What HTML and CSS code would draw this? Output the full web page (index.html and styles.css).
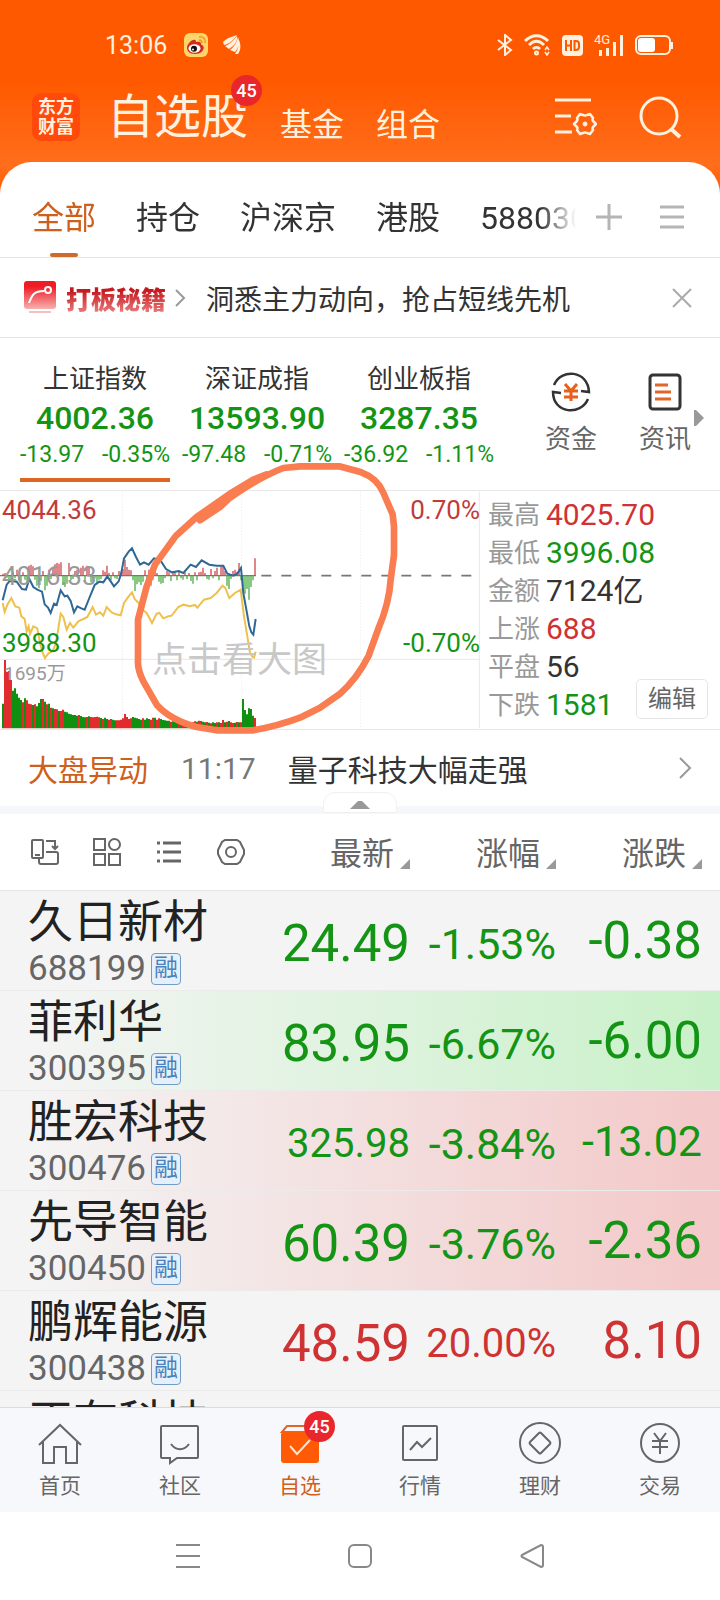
FILE: index.html
```html
<!DOCTYPE html>
<html lang="zh-CN">
<head>
	<meta charset="UTF-8">
	<meta name="viewport" content="width=device-width, initial-scale=1">
	<title>自选股</title>
	<link rel="stylesheet" href="styles.css">
</head>
<body>
	<header class="top">
		<div class="status">
			<span class="time">13:06</span>
			<svg class="weibo" width="24" height="24" viewBox="0 0 24 24">
				<rect width="24" height="24" rx="6" fill="#fdd56b"/>
				<path d="M3 15c0-4 5-9 8-8 1 0 1 2 1 2s4-1 5 1c0 1 0 2 1 2 4 2 1 9-7 9-5 0-8-3-8-6z" fill="#d52b1e"/>
				<ellipse cx="10.500" cy="15.500" rx="6" ry="4.200" fill="#fff"/>
				<circle cx="10" cy="15.800" r="3" fill="#111"/>
				<circle cx="9" cy="16.500" r="1" fill="#fff"/>
				<path d="M15 4c4-1 7 2 6 6M15 7c2 0 3 1 3 3" fill="none" stroke="#f39a1d" stroke-width="1.500"/>
			</svg>
			<svg width="18" height="20" viewBox="0 0 18 20" fill="#fff1df">
				<path d="M0 7C4 3 8 2 14 0 11 5 6 9 1 10zM2 11c5-2 9-6 12-10 1 5-3 10-8 13zM7 15c4-3 7-8 8-13 2 5 1 10-3 15zM12 19c3-4 4-9 4-14 2 5 2 10-1 14z"/>
			</svg>
			<div class="signals">
				<svg width="16" height="22" viewBox="0 0 16 22"><path d="M1 6l13 10-6 5V1l6 5L1 16" fill="none" stroke="#fff1df" stroke-width="2"/></svg>
				<svg width="27" height="22" viewBox="0 0 27 22" fill="none" stroke="#fff1df" stroke-width="3">
					<path d="M1 7c7-7 16-7 23 0M5 11c5-5 10-5 15 0M9 15c2-2 5-2 7 0"/>
					<circle cx="12.500" cy="19" r="1" />
					<path d="M21 16l2-3 2 3M21 18l2 3 2-3" stroke-width="1.500"/>
				</svg>
				<svg width="21" height="21" viewBox="0 0 21 21"><rect width="21" height="21" rx="4" fill="#fff1df"/><path d="M4 5v11M9 5v11M4 10.500h5M12.500 6v9h1.500q3 0 3-3V9q0-3-3-3z" fill="none" stroke="#ff5900" stroke-width="2"/></svg>
				<div class="cell">
					<span>4G</span>
					<svg width="30" height="21" viewBox="0 0 30 21" fill="#fff1df"><path d="M5 15h3v6H5zM12 13h3v8h-3zM19 7h3v14h-3zM26 0h3v21h-3z"/></svg>
				</div>
				<svg width="39" height="21" viewBox="0 0 39 21"><rect x="1" y="1" width="34" height="18" rx="5" fill="none" stroke="#fff1df" stroke-width="2"/><rect x="3" y="3" width="17" height="14" rx="3" fill="#fff"/><path d="M37 7v7" stroke="#fff1df" stroke-width="2"/></svg>
			</div>
		</div>
		<div class="titlebar">
			<div class="logo">东方<br>财富</div>
			<nav class="sections">
				<a class="current" href="#zixuan">自选股<span class="badge">45</span></a>
				<a href="#jijin">基金</a>
				<a href="#zuhe">组合</a>
			</nav>
			<button type="button" aria-label="设置">
				<svg width="42" height="42" viewBox="0 0 42 42" fill="none" stroke="#fff1df" stroke-width="3">
					<path d="M0 4h36M0 20h16M0 36h17"/>
					<path d="M25 18l3 1q2 1 4 0l3-1 3 4q-1 2 0 3l3 3-3 3q-1 2 0 3l-3 4-3-1q-2-1-4 0l-3 1-3-4q1-2 0-3l-3-3 3-3q1-2 0-3z" stroke-width="2.500" stroke-linejoin="round"/>
					<circle cx="30" cy="28" r="2" fill="#fff1df" stroke-width="1"/>
				</svg>
			</button>
			<button type="button" aria-label="搜索">
				<svg width="44" height="44" viewBox="0 0 44 44" fill="none" stroke="#fff1df" stroke-width="3"><circle cx="21" cy="21" r="18"/><path d="M33 34l9 8" stroke-width="4"/></svg>
			</button>
		</div>
	</header>

	<main class="panel">
		<div class="groups">
			<nav>
				<a class="on" href="#all">全部</a>
				<a href="#hold">持仓</a>
				<a href="#hsj">沪深京</a>
				<a href="#hk">港股</a>
				<a href="#588030">588030</a>
			</nav>
			<button type="button" aria-label="添加"><svg width="26" height="26" viewBox="0 0 26 26"><path d="M0 13h26M13 0v26" stroke="#b5b5b5" stroke-width="3"/></svg></button>
			<button type="button" aria-label="分组"><svg width="24" height="26" viewBox="0 0 24 26"><path d="M0 3h24M0 13h24M0 23h24" stroke="#b5b5b5" stroke-width="3"/></svg></button>
		</div>

		<div class="promo">
			<svg width="32" height="34" viewBox="0 0 32 34">
				<defs><linearGradient id="red" x2="0" y2="1"><stop offset=".2" stop-color="#ee1c25"/><stop offset="1" stop-color="#f6b0b0"/></linearGradient></defs>
				<rect width="32" height="28" rx="3" fill="url(#red)"/>
				<path d="M5 22c3-8 5-12 15-12" fill="none" stroke="#fff" stroke-width="2"/><circle cx="24" cy="9" r="3" fill="none" stroke="#fff" stroke-width="2"/>
				<path d="M5 31h22" stroke="#f6c0c0" stroke-width="2"/>
			</svg>
			<strong>打板秘籍</strong>
			<svg class="arrow" width="12" height="20" viewBox="0 0 12 20"><path d="M2 2l8 8-8 8" fill="none" stroke="#999" stroke-width="2"/></svg>
			<a href="#promo">洞悉主力动向，抢占短线先机</a>
			<button type="button" aria-label="关闭"><svg width="20" height="20" viewBox="0 0 20 20"><path d="M1 1l18 18M19 1L1 19" stroke="#aaa" stroke-width="2"/></svg></button>
		</div>

		<section class="market">
			<div class="quotes">
				<a class="quote on" href="#sh"><span>上证指数</span><b>4002.36</b><i>-13.97</i><i>-0.35%</i></a>
				<a class="quote" href="#sz"><span>深证成指</span><b>13593.90</b><i>-97.48</i><i>-0.71%</i></a>
				<a class="quote" href="#cy"><span>创业板指</span><b>3287.35</b><i>-36.92</i><i>-1.11%</i></a>
			</div>
			<div class="tools">
				<a href="#zijin">
					<svg width="40" height="40" viewBox="0 0 40 40" fill="none" stroke="#333" stroke-width="2.500">
						<path d="M3 13C10-4 37-2 38 20l-8-1M37 27C30 44 2 42 2 20l8 1"/>
						<path d="M14 12l6 7 6-7M13 19h14M13 25h14M20 19v10" stroke="#e8601c" stroke-width="3"/>
					</svg>
					资金
				</a>
				<a href="#zixun">
					<svg width="40" height="40" viewBox="0 0 40 40" fill="none" stroke="#333" stroke-width="3">
						<rect x="5" y="3" width="30" height="34" rx="3"/>
						<path d="M10 13h13M10 20h16M10 27h16" stroke="#e0662a"/>
					</svg>
					资讯
				</a>
				<svg class="more" width="10" height="16" viewBox="0 0 10 16"><path d="M0 0h2l8 8-8 8H0z" fill="#999"/></svg>
			</div>
		</section>

		<section class="trend">
			<a class="chart" href="#chart" aria-label="点击看大图">
				<svg viewBox="0 34 1440 714" fill="none">
					<g stroke="#e8e8e8" stroke-width="3">
						<path d="M0 539H1440"/>
						<path d="M367 36V746M724 36V746M1081 36V746" stroke-dasharray="3 6"/>
						<path d="M1438 36V746"/>
					</g>
					<path d="M784 288H1420" stroke="#777" stroke-width="5" stroke-dasharray="30 30"/>
					<path d="M0 288H768" stroke="#777" stroke-width="4"/>
					<g id="bars"></g>
					<path d="M8 370L14 397 22 375 34 355 46 380 58 384 64 410 74 418 80 456 86 440 90 463 100 440 112 446 120 490 128 520 135 535 146 520 158 515 168 490 176 440 182 402 190 412 200 450 210 430 220 444 235 425 250 418 262 412 278 382 288 405 300 398 310 408 320 382 335 398 348 404 362 407 372 370 386 350 396 338 404 358 416 370 428 390 440 400 456 430 470 402 478 400 490 416 505 410 515 408 535 382 550 375 570 380 585 376 592 384 612 360 632 355 650 340 668 318 676 325 688 355 705 340 722 330 732 410 742 470 750 520 758 532 762 534 767 516" stroke="#efc04c" stroke-width="6"/>
					<path d="M8 362L20 315 30 303 50 306 66 328 78 330 88 298 100 322 112 330 126 336 134 374 144 384 152 400 162 372 170 376 182 332 194 350 202 348 212 364 222 398 232 380 244 386 254 390 268 355 284 316 298 306 310 308 322 290 342 320 356 305 364 280 372 236 386 216 396 206 408 232 420 255 432 248 446 255 462 236 480 240 498 268 516 278 536 274 550 280 572 255 588 262 605 242 628 255 650 258 670 258 682 282 700 288 712 282 723 265 730 340 740 395 748 440 754 458 760 465 767 418" stroke="#2f6795" stroke-width="6"/>
				</svg>
				<span class="lbl high">4044.36</span>
				<span class="lbl mid">4016.33</span>
				<span class="lbl low">3988.30</span>
				<span class="lbl up">0.70%</span>
				<span class="lbl down">-0.70%</span>
				<span class="lbl vol">1695万</span>
				<span class="lbl hint">点击看大图</span>
				<svg class="ring" viewBox="0 34 1440 714" fill="none" stroke="#f97d50" stroke-width="20" stroke-linejoin="round" stroke-linecap="round">
					<path d="M600 122L660 82 690 54Q780-8 850-35L900-40H1018L1084-22Q1130-5 1149 37L1178 104 1182 140V226L1172 300Q1168 370 1134 450L1106 528Q1070 598 1020 642L960 684 900 714Q830 740 760 752H650L590 742Q510 720 470 675L430 605Q412 570 414 540V420L440 320 465 255 528 168 590 112 690 42 760 0 800-16"/>
				</svg>
			</a>
			<div class="stats">
				<dl>
					<dt>最高</dt><dd class="red">4025.70</dd>
					<dt>最低</dt><dd class="green">3996.08</dd>
					<dt>金额</dt><dd>7124亿</dd>
					<dt>上涨</dt><dd class="red">688</dd>
					<dt>平盘</dt><dd>56</dd>
					<dt>下跌</dt><dd class="green">1581</dd>
				</dl>
				<button type="button">编辑</button>
			</div>
		</section>

		<a class="news" href="#news">
			<b>大盘异动</b><time>11:17</time><span>量子科技大幅走强</span>
			<svg width="14" height="24" viewBox="0 0 14 24"><path d="M2 2l10 10L2 22" fill="none" stroke="#999" stroke-width="2"/></svg>
		</a>
		<div class="strip">
			<button type="button" aria-label="收起"><svg width="20" height="9" viewBox="0 0 20 9"><path d="M0 9l8-8h4l8 8z" fill="#999"/></svg></button>
		</div>

		<div class="list">
			<table>
				<colgroup><col><col class="num"><col class="num"><col class="last"></colgroup>
				<thead>
					<tr>
						<th>
							<div class="views">
								<button type="button" aria-label="横屏"><svg width="28" height="28" viewBox="0 0 28 28"><rect x="1" y="2" width="11" height="18" rx="1"/><path d="M4 17h5M15 3h9v8M21 8l3 3 3-3M15 14h10q2 0 2 2v8q0 2-2 2H10q-2 0-2-2v-3"/></svg></button>
								<button type="button" aria-label="宫格"><svg width="28" height="28" viewBox="0 0 28 28"><path d="M1 1h11v11H1zM1 16h11v11H1zM16 16h11v11H16z"/><circle cx="21.500" cy="6.500" r="5.500"/></svg></button>
								<button type="button" aria-label="列表"><svg width="28" height="28" viewBox="0 0 28 28"><path d="M2 5h3M2 14h3M2 23h3M8 5h18M8 14h18M8 23h18" stroke-width="3"/></svg></button>
								<button type="button" aria-label="设置"><svg width="28" height="28" viewBox="0 0 28 28"><path d="M8 2h12l3 2 4 8v4l-4 8-3 2H8l-3-2-4-8v-4l4-8z"/><circle cx="14" cy="14" r="5"/></svg></button>
							</div>
						</th>
						<th>最新</th>
						<th>涨幅</th>
						<th>涨跌</th>
					</tr>
				</thead>
				<tbody>
					<tr class="green">
						<td><div class="name">久日新材</div><div class="code">688199<em>融</em></div></td>
						<td>24.49</td><td class="fit">-1.53%</td><td>-0.38</td>
					</tr>
					<tr class="green fall">
						<td><div class="name">菲利华</div><div class="code">300395<em>融</em></div></td>
						<td>83.95</td><td class="fit">-6.67%</td><td>-6.00</td>
					</tr>
					<tr class="green rise">
						<td><div class="name">胜宏科技</div><div class="code">300476<em>融</em></div></td>
						<td class="long">325.98</td><td class="fit">-3.84%</td><td class="fit">-13.02</td>
					</tr>
					<tr class="green rise">
						<td><div class="name">先导智能</div><div class="code">300450<em>融</em></div></td>
						<td>60.39</td><td class="fit">-3.76%</td><td>-2.36</td>
					</tr>
					<tr class="red">
						<td><div class="name">鹏辉能源</div><div class="code">300438<em>融</em></div></td>
						<td>48.59</td><td class="long">20.00%</td><td>8.10</td>
					</tr>
					<tr>
						<td><div class="name">正有科技</div></td>
						<td></td><td></td><td></td>
					</tr>
				</tbody>
			</table>
		</div>
	</main>

	<nav class="tabbar">
		<a href="#home"><svg width="44" height="44" viewBox="0 0 44 44"><path d="M1 23L22 3l21 20M5 20v21h11V25h12v16h11V20"/></svg>首页</a>
		<a href="#club"><svg width="44" height="44" viewBox="0 0 44 44"><path d="M5 4h34q1 0 1 1v30q0 1-1 1H19l-7 5v-5H4q-1 0-1-1V5q0-1 1-1zM13 22c5 7 13 7 18 0"/></svg>社区</a>
		<a class="on" href="#zixuan"><svg width="44" height="44" viewBox="0 0 44 44"><path d="M4 10l5-6h26l5 6z" stroke="#e0662a"/><rect x="3" y="10" width="38" height="31" rx="3" fill="#ff5a05" stroke="none"/><path d="M12 24l7 8 13-14" stroke="#ffe6cc"/></svg>自选<span class="badge">45</span></a>
		<a href="#quotes"><svg width="44" height="44" viewBox="0 0 44 44"><rect x="5" y="4" width="34" height="34" rx="1"/><path d="M12 28l7-8 5 5 9-9"/></svg>行情</a>
		<a href="#wealth"><svg width="44" height="44" viewBox="0 0 44 44"><circle cx="22" cy="21" r="20"/><path d="M21 11q1-1 2 0l9 9q1 1 0 2l-9 9q-1 1-2 0l-9-9q-1-1 0-2z"/></svg>理财</a>
		<a href="#trade"><svg width="44" height="44" viewBox="0 0 44 44"><circle cx="22" cy="21" r="19"/><path d="M16 11l6 8 6-8M14 19h16M14 25h16M22 19v13"/></svg>交易</a>
	</nav>
	<div class="sysbar">
		<button type="button" aria-label="最近"><svg width="24" height="24" viewBox="0 0 24 24"><path d="M0 1h24M0 12h24M0 23h24"/></svg></button>
		<button type="button" aria-label="主屏"><svg width="24" height="24" viewBox="0 0 24 24"><rect x="1" y="1" width="22" height="22" rx="5"/></svg></button>
		<button type="button" aria-label="返回"><svg width="24" height="24" viewBox="0 0 24 24"><path d="M2 11L21 1q2 0 2 2v18q0 2-2 2L2 13q-1-1 0-2z"/></svg></button>
	</div>
	<script src="chart.js"></script>
</body>
</html>
```
FILE: styles.css
```css
* {
	box-sizing: border-box;
}
body {
	margin: 0;
	height: 100vh;
	display: flex;
	flex-direction: column;
	overflow: hidden;
	background: #fff;
	color: #333;
	font-family: Roboto, "Noto Sans CJK SC", sans-serif;
}
a {
	color: inherit;
	text-decoration: none;
}
button {
	padding: 0;
	border: 0;
	background: none;
	color: inherit;
	font: inherit;
}
svg {
	display: block;
	flex: none;
}
.green {
	color: #149414;
}
.red {
	color: #cf3232;
}
.badge {
	position: absolute;
	width: 31px;
	height: 31px;
	border-radius: 50%;
	background: #e8262b;
	color: #fff;
	font-size: 18px;
	font-weight: 500;
	line-height: 31px;
	text-align: center;
}

/* header */
.top {
	flex: none;
	height: 196px;
	background: linear-gradient(#ff5900 80px, #ff6e1c 165px, #ff5900 196px);
	color: #fff1df;
}
.status {
	display: flex;
	align-items: center;
	height: 90px;
	padding: 0 46px 0 105px;
}
.time {
	font-size: 25px;
}
.weibo {
	margin: 0 15px 0 17px;
}
.signals {
	display: flex;
	align-items: center;
	gap: 11px;
	margin-left: auto;
}
.cell {
	position: relative;
}
.cell span {
	position: absolute;
	top: -2px;
	left: 0;
	font-size: 13px;
	line-height: 14px;
}
.titlebar {
	display: flex;
	align-items: center;
	height: 54px;
	padding: 0 38px 0 32px;
}
.logo {
	width: 48px;
	height: 48px;
	padding: 4px 0;
	border-radius: 9px;
	background: #ff4a0c;
	font-size: 18px;
	font-weight: 700;
	line-height: 20px;
	text-align: center;
}
.sections {
	display: flex;
	align-items: flex-end;
	gap: 32px;
	flex: 1;
	padding-left: 27px;
	font-size: 32px;
	line-height: 38px;
}
.sections .current {
	position: relative;
	font-size: 47px;
	line-height: 54px;
}
.sections .badge {
	top: -15px;
	right: -14px;
}
.titlebar button + button {
	margin-left: 41px;
}

/* panel */
.panel {
	flex: 1;
	min-height: 0;
	display: flex;
	flex-direction: column;
	margin-top: -34px;
	border-radius: 32px 32px 0 0;
	background: #fff;
}
.groups {
	flex: none;
	display: flex;
	align-items: center;
	height: 96px;
	padding: 0 36px 0 32px;
	border-bottom: 1px solid #e3e3e3;
	font-size: 32px;
}
.groups nav {
	display: flex;
	gap: 40px;
	flex: 1;
	min-width: 0;
	height: 95px;
	padding-top: 18px;
	line-height: 76px;
	white-space: nowrap;
	overflow: hidden;
	mask-image: linear-gradient(to left, transparent, #000 36px);
}
.groups nav a {
	position: relative;
}
.groups nav .on {
	color: #cf5f1c;
}
.groups .on::after {
	content: "";
	position: absolute;
	bottom: 0;
	left: 18px;
	width: 28px;
	height: 4px;
	border-radius: 2px;
	background: #cf6a2c;
}
.groups button {
	margin: 15px 0 0 20px;
}
.groups button + button {
	margin-left: 38px;
}
.promo {
	flex: none;
	display: flex;
	align-items: center;
	height: 80px;
	padding: 0 28px 0 24px;
	border-bottom: 1px solid #e3e3e3;
	font-size: 28px;
}
.promo strong {
	margin-left: 10px;
	background: linear-gradient(#c41a20 30%, #f08a8a);
	background-clip: text;
	color: transparent;
	font-size: 25px;
	font-weight: 900;
}
.arrow {
	margin: 0 20px 0 8px;
}
.promo a {
	flex: 1;
}

.market {
	flex: none;
	display: flex;
	padding: 22px 0 8px 20px;
}
.quotes {
	flex: 474;
	display: grid;
	grid-template-columns: repeat(3, 1fr);
	gap: 12px;
}
.quote {
	display: flex;
	flex-wrap: wrap;
	justify-content: space-between;
	color: #149414;
	border-bottom: 4px solid transparent;
	padding-bottom: 6px;
	white-space: nowrap;
}
.quote.on {
	border-image: linear-gradient(#de6524, #de6524) 1;
}
.quote span,
.quote b {
	width: 100%;
	text-align: center;
}
.quote span {
	color: #333;
	font-size: 26px;
	line-height: 38px;
}
.quote b {
	font-size: 32px;
	font-weight: 500;
	line-height: 40px;
}
.quote i {
	font-size: 23px;
	font-style: normal;
	line-height: 34px;
}
.tools {
	position: relative;
	flex: 188;
	display: grid;
	grid-template-columns: 1fr 1fr;
	padding: 12px 8px 0 30px;
	color: #666;
	font-size: 26px;
	line-height: 54px;
	text-align: center;
}
.tools a svg {
	margin: 0 auto;
}
.more {
	position: absolute;
	top: 50px;
	right: 16px;
}

.trend {
	flex: none;
	display: flex;
	border-top: 1px solid #e8e8e8;
	border-bottom: 1px solid #e8e8e8;
}
.chart {
	position: relative;
	flex: 2;
}
.chart svg {
	width: 100%;
}
.chart .ring {
	position: absolute;
	inset: 0;
	overflow: visible;
	z-index: 1;
}
.lbl {
	position: absolute;
	left: 2px;
	font-size: 26px;
	line-height: 30px;
}
.high {
	top: 4px;
	color: #c43a3a;
}
.mid {
	top: 70px;
	color: #999;
}
.low {
	top: 137px;
	color: #149414;
}
.up,
.down {
	right: 0;
	left: auto;
}
.up {
	top: 4px;
	color: #c43a3a;
}
.down {
	top: 137px;
	color: #149414;
}
.vol {
	top: 168px;
	left: 4px;
	color: #999;
	font-size: 19px;
}
.hint {
	top: 150px;
	left: 152px;
	color: #c8c8c8;
	font-size: 35px;
	line-height: 40px;
}
.stats {
	position: relative;
	flex: 1;
}
.stats dl {
	display: grid;
	grid-template-columns: 58px 1fr;
	margin: 0;
	padding: 5px 0 0 8px;
	line-height: 38px;
}
.stats dt {
	color: #999;
	font-size: 26px;
}
.stats dd {
	margin: 0;
	font-size: 30px;
}
.stats button {
	position: absolute;
	right: 12px;
	bottom: 10px;
	width: 72px;
	height: 40px;
	border: 1px solid #e6e6e6;
	border-radius: 5px;
	background: #fff;
	color: #666;
	font-size: 24px;
	line-height: 38px;
}

.news {
	flex: none;
	display: flex;
	align-items: center;
	height: 76px;
	padding: 0 28px;
	font-size: 30px;
}
.news b {
	color: #cf5f1c;
	font-weight: 400;
}
.news time {
	margin: 0 32px 0 33px;
	color: #777;
}
.news span {
	flex: 1;
}
.strip {
	position: relative;
	flex: none;
	height: 8px;
	background: #f5f7fa;
}
.strip button {
	position: absolute;
	bottom: 1px;
	left: 50%;
	width: 74px;
	height: 21px;
	margin-left: -37px;
	border: 1px solid #f0f0f0;
	border-radius: 12px 12px 0 0;
	background: #fff;
}
.strip svg {
	margin: 4px auto 0;
}

/* stock list */
.list {
	flex: 1;
	min-height: 0;
	overflow: hidden;
}
table {
	width: 100%;
	table-layout: fixed;
	border-spacing: 0;
}
.num {
	width: 146px;
}
.last {
	width: 164px;
}
th {
	height: 77px;
	padding: 0 18px 3px 0;
	border-bottom: 1px solid #e6e6e6;
	color: #666;
	font-size: 32px;
	font-weight: 400;
	text-align: right;
	white-space: nowrap;
}
th + th::after {
	content: "";
	display: inline-block;
	margin: 0 0 -4px 6px;
	border: 5px solid;
	border-color: transparent #999 #999 transparent;
}
th:not(:last-child),
td:not(:last-child) {
	padding-right: 0;
}
.views {
	display: flex;
	gap: 34px;
	padding: 3px 0 0 31px;
}
.views svg {
	fill: none;
	stroke: #666;
	stroke-width: 2;
}
tbody tr {
	background: #f4f4f4;
}
tbody .fall {
	background: linear-gradient(to right, #f4f4f4 5%, #c8f1c8);
}
tbody .rise {
	background: linear-gradient(to right, #f4f4f4 5%, #f3c8c8);
}
td {
	height: 100px;
	padding: 6px 18px 0 0;
	border-bottom: 1px solid #ebebeb;
	font-size: 51px;
	text-align: right;
	white-space: nowrap;
}
td:first-child {
	padding: 4px 0 0 28px;
	text-align: left;
	vertical-align: top;
}
td:last-child {
	padding-top: 0;
}
td.fit {
	font-size: 43px;
}
td.long {
	font-size: 40px;
}
.name {
	color: #222;
	font-size: 45px;
	line-height: 56px;
}
.code {
	display: flex;
	align-items: center;
	gap: 5px;
	color: #666;
	font-size: 35px;
	line-height: 36px;
}
.code em {
	width: 30px;
	height: 32px;
	border: 1px solid #6f9ccb;
	border-radius: 4px;
	background: #e6f0fa;
	color: #4a82bd;
	font-size: 24px;
	font-style: normal;
	line-height: 29px;
	text-align: center;
}

/* bottom bars */
.tabbar {
	flex: none;
	display: grid;
	grid-template-columns: repeat(6, 1fr);
	height: 105px;
	padding-top: 14px;
	border-top: 1px solid #dcdcdc;
	background: #f7f8fb;
	color: #666;
	font-size: 21px;
	line-height: 41px;
	text-align: center;
}
.tabbar a {
	position: relative;
}
.tabbar svg {
	margin: 0 auto;
	fill: none;
	stroke: #666;
	stroke-width: 2;
}
.tabbar .on {
	color: #cf5f1c;
}
.tabbar .badge {
	top: -11px;
	left: 64px;
}
.sysbar {
	flex: none;
	display: flex;
	justify-content: center;
	align-items: center;
	gap: 148px;
	height: 88px;
}
.sysbar svg {
	fill: none;
	stroke: #888;
	stroke-width: 2;
}
```
FILE: chart.js
```js
// one bar each minute-slot: letter is the colour, number the height
var volume = 'g74 r205 r170 r172 r145 g113 g120 g104 g92 g85 r78 g90 r84 r74 r72 g70 r72 g66 g76 g88 r88 g80 r72 g74 r62 g60 r58 r57 g52 r52 r56 g50 g48 g44 g42 g40 g40 g38 r40 g37 g34 g33 r34 g36 r34 r33 r34 r35 r33 g31 r28 g32 g28 r26 r28 g26 g24 r24 r24 r26 r30 r43 r34 r28 r30 g34 g32 g30 g28 g26 r30 g26 g30 g28 r26 r32 g32 r26 r30 g28 g25 g24 g23 g23 r20 g21 g19 g16 r18 g18 r16 r15 g19 g16 g16 r18 r21 g20 r23 r22 g20 g18 r19 g17 r15 g18 g16 r18 g18 r16 r25 g18 r20 g22 r18 r16 g17 r19 g18 r18 g88 g55 g42 g60 g58 g38 r31';
var flow = [6, 8, -6, -14, -20, 12, -8, 18, -14, -18, 10, -12, -24, 30, 33, 28, -12, -30, -38, -16, 14, -44, -30, 18, -10, 24, 34, 38, 36, 40, -28, -34, -24, 38, -14, -10, 14, 18, -12, 24, 30, -16, 30, 28, -20, -16, -8, -26, -12, -10, 16, 12, 30, 8, -14, 10, -8, -10, 14, 12, 20, 48, 26, 18, 16, -14, -46, -26, -20, -28, -18, 16, -14, 18, -30, -12, 22, 8, -18, -24, -22, -8, 14, 10, -16, 12, 10, -14, 16, -8, -12, 10, -10, 8, -16, -24, 10, -14, 10, 12, 24, 8, -10, -12, 20, -8, 14, 24, -14, 28, 30, 14, -30, -40, -10, 14, 18, 12, 38, -14, -36, -54, -40, -72, -34, -14, 52];

var bars = document.getElementById('bars');
function bar(x, y, h, w, color) {
	var p = document.createElementNS('http://www.w3.org/2000/svg', 'path');
	p.setAttribute('d', 'M' + x + ' ' + y + 'v' + -h);
	p.setAttribute('stroke', color);
	p.setAttribute('stroke-width', w);
	bars.appendChild(p);
}
volume.split(' ').forEach(function (v, i) {
	bar(9 + i * 6, 746, +v.slice(1), 6, v[0] == 'r' ? '#e02c2c' : '#109010');
});
flow.forEach(function (h, i) {
	bar(9 + i * 6, 288, h, 4, h > 0 ? '#cf4a50' : '#4cae45');
});
```
